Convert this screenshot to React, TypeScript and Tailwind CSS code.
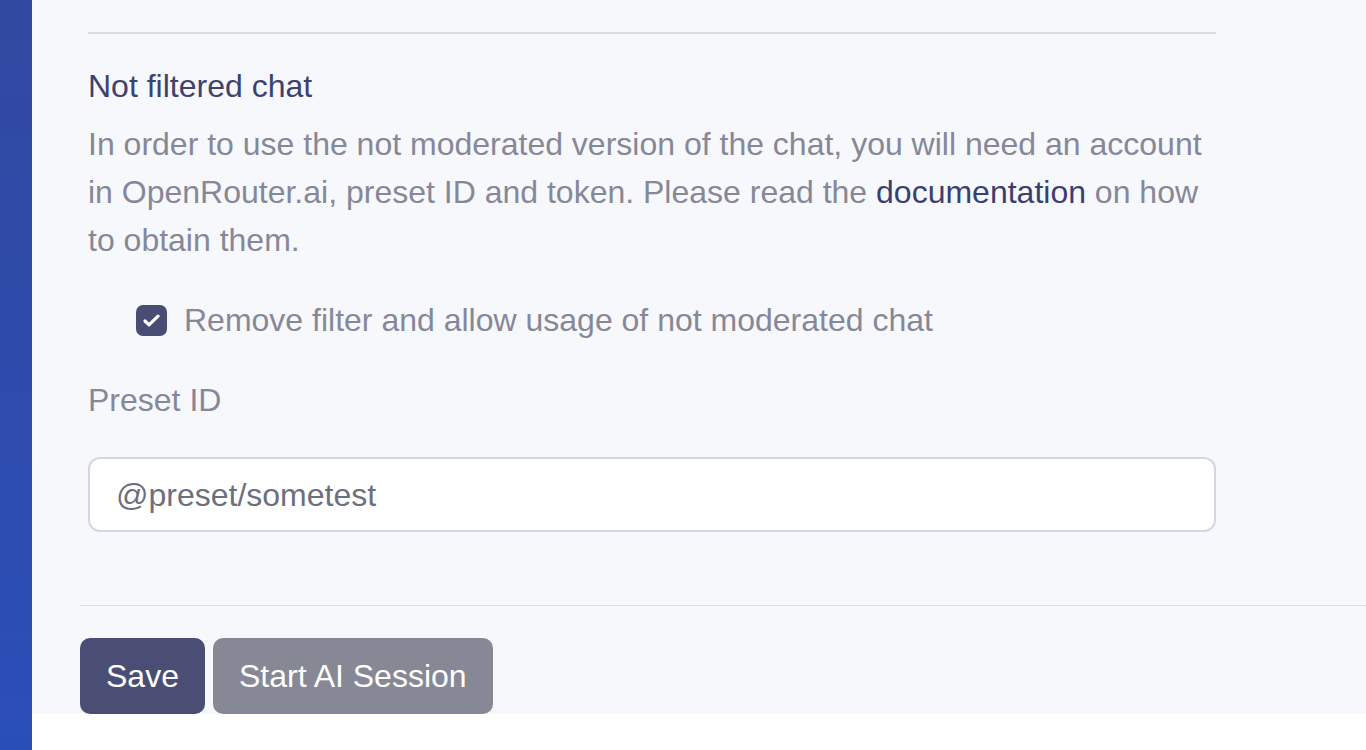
import React from "react";

export default function App() {
  return (
    <div
      className="flex h-[750px] w-full bg-white overflow-hidden"
      style={{ fontFamily: '"Liberation Sans", Arial, Helvetica, sans-serif' }}
    >
      <div className="w-[32px] shrink-0 self-stretch bg-gradient-to-b from-[#3149a0] to-[#2a4eb8]" />
      <div className="flex-1 min-w-0">
        <div className="bg-[#f7f8fc] h-[714px] flex flex-col">
          <div className="pl-[56px] w-[1184px]">
            <div className="mt-[32px] h-[2px] bg-[#dcdde3]" />
            <h2 className="mt-[28px] text-[32px] leading-[48px] text-[#3d4270] font-normal">
              Not filtered chat
            </h2>
            <p className="mt-[10px] text-[32px] leading-[48px] text-[#868898]">
              In order to use the not moderated version of the chat, you will need an account in
              OpenRouter.ai, preset ID and token. Please read the{" "}
              <a className="text-[#3b3f6e]">documentation</a> on how to obtain them.
            </p>
            <label className="mt-[32px] ml-[48px] flex items-center gap-[17px] text-[32px] leading-[48px] text-[#868898]">
              <span className="w-[31px] h-[31px] rounded-[7px] bg-[#4a4d73] flex items-center justify-center">
                <svg width="17" height="13" viewBox="0 0 17 13" fill="none">
                  <path
                    d="M2 7 L6 10.8 L15 2.2"
                    stroke="white"
                    strokeWidth="3.2"
                    strokeLinecap="round"
                    strokeLinejoin="round"
                  />
                </svg>
              </span>
              Remove filter and allow usage of not moderated chat
            </label>
            <div className="mt-[32px] text-[32px] leading-[48px] text-[#868898]">Preset ID</div>
            <div className="mt-[33px] h-[75px] rounded-[12px] border-2 border-[#d5d6e1] bg-white flex items-center pl-[26px] text-[32px] text-[#6e6f7d]">
              @preset/sometest
            </div>
          </div>
          <div className="ml-[48px] mt-[73px] h-[2px] bg-[#dcdde3]" />
          <div className="ml-[48px] mt-[32px] flex gap-[8px]">
            <button className="h-[76px] px-[26px] rounded-[10px] bg-[#4b4e74] text-white text-[32px]">
              Save
            </button>
            <button className="h-[76px] px-[26px] rounded-[10px] bg-[#878895] text-white text-[32px]">
              Start AI Session
            </button>
          </div>
        </div>
      </div>
    </div>
  );
}
